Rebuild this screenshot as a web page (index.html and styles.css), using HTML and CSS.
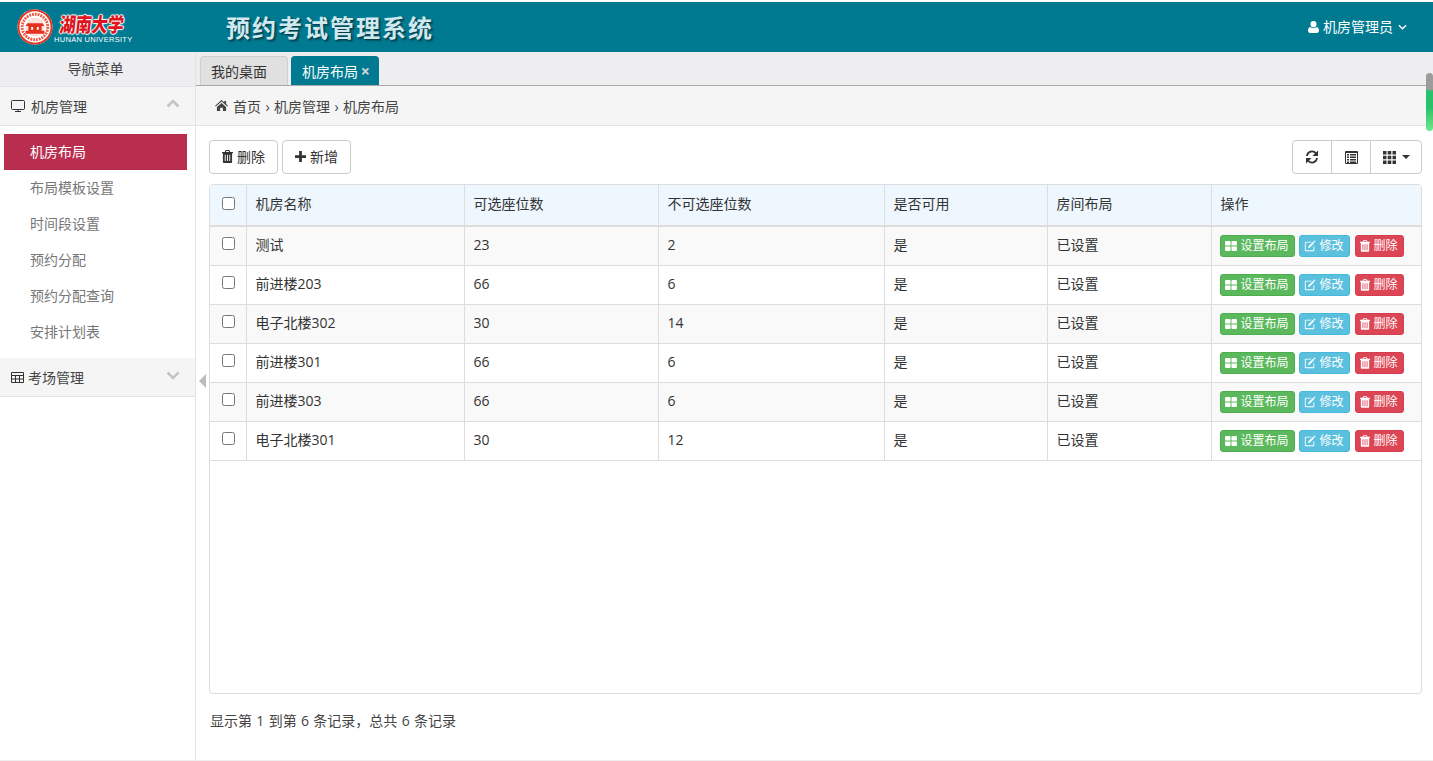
FILE: index.html
```html
<!DOCTYPE html>
<html lang="zh">
<head>
<meta charset="utf-8">
<title>预约考试管理系统</title>
<link rel="stylesheet" href="styles.css">
</head>
<body>
<svg class="defs" width="0" height="0">
  <symbol id="i-trash" viewBox="0 0 12 14"><path d="M4 0h4l1 2h3v1.500h-1V13a1 1 0 0 1-1 1H2a1 1 0 0 1-1-1V3.500H0V2h3zM4.700 1 4.300 2h3.400l-.4-1zM3 5v7h1V5zm2.500 0v7h1V5zM8 5v7h1V5z" fill="currentColor" fill-rule="evenodd"/></symbol>
  <symbol id="i-edit" viewBox="0 0 14 14"><path d="M2 2h7L8 3H2.500A.5.500 0 0 0 2 3.500v8a.5.500 0 0 0 .5.500h8a.5.500 0 0 0 .5-.500V8l1-1v5a1 1 0 0 1-1 1H2a1 1 0 0 1-1-1V3a1 1 0 0 1 1-1z" fill="currentColor"/><path d="M5 7.500 10.500 2 12 3.500 6.500 9 4.800 9.300zM11 1.500l.6-.6a.7.700 0 0 1 1 0l.5.500a.7.700 0 0 1 0 1l-.6.6z" fill="currentColor"/></symbol>
  <symbol id="i-large" viewBox="0 0 13 11"><path d="M0 1a1 1 0 0 1 1-1h4a1 1 0 0 1 1 1v3a1 1 0 0 1-1 1H0zM7 1a1 1 0 0 1 1-1h4a1 1 0 0 1 1 1v4H7zM0 6h6v4a1 1 0 0 1-1 1H1a1 1 0 0 1-1-1zM7 6h6v4a1 1 0 0 1-1 1H8a1 1 0 0 1-1-1z" fill="currentColor"/></symbol>
</svg>

<header class="topbar">
  <div class="logo">
    <svg class="seal" viewBox="0 0 38 38" width="36" height="36" aria-hidden="true">
      <circle cx="19" cy="19" r="18.500" fill="#fff"/>
      <circle cx="19" cy="19" r="17.500" fill="none" stroke="#e8301f" stroke-width="2"/>
      <circle cx="19" cy="19" r="13.500" fill="none" stroke="#ee5a45" stroke-width="3" stroke-dasharray="2 1"/>
      <circle cx="19" cy="19" r="10" fill="#fbe3dc"/>
      <path d="M9 23h20v3H9zM11 15h16l2 3H9zM12 18h14v5H12z" fill="#e8301f"/>
      <path d="M15 19h2v3h-2zM21 19h2v3h-2z" fill="#fff"/>
    </svg>
    <div class="logo-text">
      <div class="logo-cn">湖南大学</div>
      <div class="logo-en">HUNAN UNIVERSITY</div>
    </div>
  </div>
  <div class="sys-title">预约考试管理系统</div>
  <div class="user">
    <svg viewBox="0 0 12 13" width="11" height="12" aria-hidden="true"><path d="M6 0a3.300 3.300 0 0 1 3.300 3.400A3.300 3.300 0 0 1 6 6.800a3.300 3.300 0 0 1-3.300-3.400A3.300 3.300 0 0 1 6 0zM2.500 6.500C3.300 7.300 4.600 7.800 6 7.800s2.700-.5 3.500-1.300c1.600.2 2.500 1.800 2.500 4.200 0 1.400-1 2.300-2.200 2.300H2.200C1 13 0 12.100 0 10.700c0-2.400.9-4 2.500-4.200z" fill="currentColor"/></svg>
    <span>机房管理员</span>
    <svg viewBox="0 0 10 6" width="9" height="6" aria-hidden="true"><path d="M1 1l4 4 4-4" fill="none" stroke="currentColor" stroke-width="1.500"/></svg>
  </div>
</header>

<div class="main">
  <aside class="sidebar">
    <div class="nav-title">导航菜单</div>
    <div class="nav-group">
      <svg class="g-icon g-wide" viewBox="0 0 14 12" width="14" height="12" aria-hidden="true"><path d="M1.500.5h11a1 1 0 0 1 1 1v7a1 1 0 0 1-1 1h-11a1 1 0 0 1-1-1v-7a1 1 0 0 1 1-1zM7 9.500v2M4 11.500h6" fill="none" stroke="currentColor"/></svg>
      <span>机房管理</span>
      <svg class="chev" viewBox="0 0 14 9" width="14" height="9" aria-hidden="true"><path d="M1.500 7.500 7 2l5.500 5.500" fill="none" stroke="currentColor" stroke-width="2.600"/></svg>
    </div>
    <ul class="nav-list">
      <li class="active">机房布局</li>
      <li>布局模板设置</li>
      <li>时间段设置</li>
      <li>预约分配</li>
      <li>预约分配查询</li>
      <li>安排计划表</li>
    </ul>
    <div class="nav-group nav-group-b">
      <svg class="g-icon" viewBox="0 0 13 11" width="13" height="11" aria-hidden="true"><path d="M.5.500h12v10H.5zM.5 3.500h12M.5 7h12M4.500 3.500v7M8.500 3.500v7" fill="none" stroke="currentColor"/></svg>
      <span>考场管理</span>
      <svg class="chev" viewBox="0 0 14 9" width="14" height="9" aria-hidden="true"><path d="M1.500 1.500 7 7l5.500-5.500" fill="none" stroke="currentColor" stroke-width="2.600"/></svg>
    </div>
  </aside>
  <div class="collapse-arrow"></div>

  <section class="content">
    <div class="tabs">
      <div class="tab">我的桌面</div>
      <div class="tab tab-on">机房布局 <span class="tab-x">×</span></div>
    </div>
    <div class="crumbs">
      <svg viewBox="0 0 14 12" width="13" height="11" aria-hidden="true"><path d="M7 0l3 2.600V1h2v3.400L14 6.200l-.7.800L7 1.600.7 7 0 6.200zM2 7.500 7 3.200l5 4.300V12H8.500V8.500h-3V12H2z" fill="currentColor"/></svg>
      <span class="crumb-text">首页<span class="sep">›</span>机房管理<span class="sep">›</span>机房布局</span>
    </div>
    <div class="panel">
      <div class="toolbar">
        <div class="tool-left">
          <button class="btn"><svg class="ic12" aria-hidden="true"><use href="#i-trash"/></svg>删除</button>
          <button class="btn"><svg viewBox="0 0 12 12" width="11" height="11" aria-hidden="true"><path d="M4.500 0h3v4.500H12v3H7.500V12h-3V7.500H0v-3h4.500z" fill="currentColor"/></svg>新增</button>
        </div>
        <div class="tool-right">
          <button class="tbtn"><svg viewBox="0 0 14 14" width="14" height="14" aria-hidden="true"><path d="M2 6A5 5 0 0 1 11 3.500M12 8A5 5 0 0 1 3 10.500" fill="none" stroke="currentColor" stroke-width="1.800"/><path d="M13 .5V6H7.500zM1 13.500V8h5.500z" fill="currentColor"/></svg></button>
          <button class="tbtn"><svg viewBox="0 0 13 13" width="13" height="13" aria-hidden="true"><path d="M.5.500h12v12H.5z" fill="none" stroke="currentColor"/><path d="M1 1h11v1H1zM2 3h2v1.500H2zM5 3h6v1.500H5zM2 5.500h2V7H2zM5 5.500h6V7H5zM2 8h2v1.500H2zM5 8h6v1.500H5zM2 10.500h2V12H2zM5 10.500h6V12H5z" fill="currentColor"/></svg></button>
          <button class="tbtn tbtn-w"><svg viewBox="0 0 13 13" width="13" height="13" aria-hidden="true"><path d="M0 0h3.500v3.500H0zM4.700 0h3.600v3.500H4.700zM9.500 0H13v3.500H9.500zM0 4.700h3.500v3.600H0zM4.700 4.700h3.600v3.600H4.700zM9.500 4.700H13v3.600H9.500zM0 9.500h3.500V13H0zM4.700 9.500h3.600V13H4.700zM9.500 9.500H13V13H9.500z" fill="currentColor"/></svg><i class="caret"></i></button>
        </div>
      </div>
      <div class="table-box">
        <table class="grid">
          <colgroup>
            <col class="c0"><col class="c1"><col class="c2"><col class="c3"><col class="c4"><col class="c5"><col>
          </colgroup>
          <thead>
            <tr><th class="chk"><span class="cb"></span></th><th>机房名称</th><th>可选座位数</th><th>不可选座位数</th><th>是否可用</th><th>房间布局</th><th>操作</th></tr>
          </thead>
          <tbody>
            <tr><td class="chk"><span class="cb"></span></td><td>测试</td><td>23</td><td>2</td><td>是</td><td>已设置</td><td class="ops"><span class="op g"><svg class="ic11" aria-hidden="true"><use href="#i-large"/></svg>设置布局</span><span class="op b"><svg class="ice" aria-hidden="true"><use href="#i-edit"/></svg>修改</span><span class="op r"><svg class="ic10" aria-hidden="true"><use href="#i-trash"/></svg>删除</span></td></tr>
            <tr><td class="chk"><span class="cb"></span></td><td>前进楼203</td><td>66</td><td>6</td><td>是</td><td>已设置</td><td class="ops"><span class="op g"><svg class="ic11" aria-hidden="true"><use href="#i-large"/></svg>设置布局</span><span class="op b"><svg class="ice" aria-hidden="true"><use href="#i-edit"/></svg>修改</span><span class="op r"><svg class="ic10" aria-hidden="true"><use href="#i-trash"/></svg>删除</span></td></tr>
            <tr><td class="chk"><span class="cb"></span></td><td>电子北楼302</td><td>30</td><td>14</td><td>是</td><td>已设置</td><td class="ops"><span class="op g"><svg class="ic11" aria-hidden="true"><use href="#i-large"/></svg>设置布局</span><span class="op b"><svg class="ice" aria-hidden="true"><use href="#i-edit"/></svg>修改</span><span class="op r"><svg class="ic10" aria-hidden="true"><use href="#i-trash"/></svg>删除</span></td></tr>
            <tr><td class="chk"><span class="cb"></span></td><td>前进楼301</td><td>66</td><td>6</td><td>是</td><td>已设置</td><td class="ops"><span class="op g"><svg class="ic11" aria-hidden="true"><use href="#i-large"/></svg>设置布局</span><span class="op b"><svg class="ice" aria-hidden="true"><use href="#i-edit"/></svg>修改</span><span class="op r"><svg class="ic10" aria-hidden="true"><use href="#i-trash"/></svg>删除</span></td></tr>
            <tr><td class="chk"><span class="cb"></span></td><td>前进楼303</td><td>66</td><td>6</td><td>是</td><td>已设置</td><td class="ops"><span class="op g"><svg class="ic11" aria-hidden="true"><use href="#i-large"/></svg>设置布局</span><span class="op b"><svg class="ice" aria-hidden="true"><use href="#i-edit"/></svg>修改</span><span class="op r"><svg class="ic10" aria-hidden="true"><use href="#i-trash"/></svg>删除</span></td></tr>
            <tr><td class="chk"><span class="cb"></span></td><td>电子北楼301</td><td>30</td><td>12</td><td>是</td><td>已设置</td><td class="ops"><span class="op g"><svg class="ic11" aria-hidden="true"><use href="#i-large"/></svg>设置布局</span><span class="op b"><svg class="ice" aria-hidden="true"><use href="#i-edit"/></svg>修改</span><span class="op r"><svg class="ic10" aria-hidden="true"><use href="#i-trash"/></svg>删除</span></td></tr>
          </tbody>
        </table>
      </div>
      <div class="summary">显示第 1 到第 6 条记录，总共 6 条记录</div>
    </div>
  </section>
  <div class="scroll-thumb"></div>
</div>
</body>
</html>
```

FILE: styles.css
```css
* { box-sizing: border-box; }
html, body { margin: 0; height: 761px; overflow: hidden; }
body {
  padding-top: 2px;
  background: #fff;
  color: #333;
  font-family: "Open Sans", "Noto Sans CJK SC", sans-serif;
  font-size: 14px;
  line-height: 20px;
}
.defs { position: absolute; }
.topbar {
  height: 50px;
  background: #007a91;
  color: #fff;
  display: flex;
  align-items: center;
  padding: 0 26px 0 17px;
}
.logo { display: flex; align-items: center; width: 209px; gap: 1px; }
.seal { flex: none; }
.logo-text { display: flex; flex-direction: column; }
.logo-cn {
  font-family: "Noto Sans CJK SC", sans-serif;
  font-weight: 900;
  font-size: 16px;
  line-height: 24px;
  width: 66px;
  margin-left: 6px;
  color: #e0141c;
  white-space: nowrap;
  transform: scaleY(1.25) skewX(-8deg);
  text-shadow: 0 0 1px #fff, 1px 0 1px #fff, -1px 0 1px #fff, 0 1px 1px #fff, 0 -1px 1px #fff;
}
.logo-en {
  font-family: "Liberation Sans", sans-serif;
  font-size: 7.500px;
  line-height: 9px;
  letter-spacing: .3px;
  white-space: nowrap;
}
.sys-title {
  font-family: "Noto Sans CJK SC", sans-serif;
  font-size: 24px;
  font-weight: 700;
  letter-spacing: 2px;
  line-height: 46px;
  color: #cfe9ee;
  text-shadow: 1px 1px 1px #033e4c, 2px 2px 2px #04505f;
}
.user { margin-left: auto; display: flex; align-items: center; gap: 4px; font-size: 14px; }
.user svg:last-child { margin-left: 1px; }

.main { position: relative; display: flex; height: 709px; border-bottom: 1px solid #eee; }
.sidebar { width: 196px; flex: none; border-right: 1px solid #e3e3e3; }
.nav-title {
  height: 35px;
  padding-right: 4px;
  background: #eeeef0;
  border-bottom: 1px solid #e3e3e3;
  text-align: center;
  line-height: 34px;
  color: #444;
}
.nav-group {
  height: 39px;
  display: flex;
  align-items: center;
  gap: 4px;
  padding: 0 15px 0 11px;
  background: #f5f5f5;
  border-bottom: 1px solid #e3e3e3;
  color: #444;
}
.nav-group span { padding-top: 2px; }
.g-icon { color: #333; }
.g-wide { margin-right: 2px; }
.chev { margin-left: auto; margin-top: -6px; color: #c4c4c4; }
.nav-group-b .chev { margin-top: -3px; }
.nav-list { list-style: none; margin: 0; padding: 8px 8px 8px 4px; }
.nav-list li {
  height: 36px;
  padding-left: 26px;
  line-height: 36px;
  color: #777;
}
.nav-list li.active { background: #b92e4e; color: #fff; }
.collapse-arrow {
  position: absolute;
  left: 199px;
  top: 322px;
  border-style: solid;
  border-width: 7px 7px 7px 0;
  border-color: transparent #bbb transparent transparent;
}

.content { flex: 1; min-width: 0; display: flex; flex-direction: column; }
.tabs {
  height: 34px;
  flex: none;
  display: flex;
  align-items: flex-end;
  gap: 3px;
  padding-left: 4px;
  background: #eeeef0;
  border-bottom: 1px solid #a8a8a8;
}
.tab {
  width: 88px;
  height: 29px;
  padding-left: 10px;
  line-height: 30px;
  color: #333;
  background: #e0e0e0;
  border: 1px solid #cfcfcf;
  border-bottom: 0;
  border-radius: 4px 4px 0 0;
}
.tab-on { background: #007a91; border-color: #007a91; color: #fff; }
.tab-x { color: #d5d5d5; font-weight: 700; font-size: 16px; line-height: 16px; margin-left: -1px; }
.crumbs {
  height: 40px;
  flex: none;
  display: flex;
  align-items: center;
  gap: 5px;
  padding-left: 19px;
  background: #f5f5f5;
  border-bottom: 1px solid #e3e3e3;
  color: #444;
}
.crumb-text { padding-top: 2px; }
.sep { display: inline-block; width: 13px; text-align: center; }
.panel { flex: 1; padding: 14px 11px 0 13px; }
.toolbar { display: flex; justify-content: space-between; height: 34px; margin-bottom: 10px; }
.tool-left { display: flex; gap: 4px; }
.btn {
  height: 34px;
  width: 69px;
  display: flex;
  align-items: center;
  justify-content: center;
  gap: 4px;
  padding: 0 0 1px;
  background: #fff;
  border: 1px solid #ccc;
  border-radius: 4px;
  color: #333;
  font: inherit;
}
.ic12 { width: 11px; height: 13px; }
.ic11 { width: 12px; height: 10px; }
.ice { width: 12px; height: 12px; }
.ic10 { width: 10px; height: 12px; }
.tool-right { display: flex; }
.tbtn {
  width: 40px;
  height: 34px;
  padding: 0;
  display: flex;
  align-items: center;
  justify-content: center;
  gap: 6px;
  background: #fff;
  border: 1px solid #ccc;
  margin-left: -1px;
  color: #333;
}
.tbtn:first-child { border-radius: 4px 0 0 4px; margin-left: 0; }
.tbtn-w { width: 52px; border-radius: 0 4px 4px 0; }
.caret { border-style: solid; border-width: 4px 4px 0; border-color: #333 transparent transparent; }
.table-box {
  height: 510px;
  border: 1px solid #ddd;
  border-radius: 4px;
  overflow: hidden;
}
.grid { width: 100%; border-collapse: collapse; table-layout: fixed; }
.c0 { width: 36px; }
.c1 { width: 218px; }
.c2 { width: 194px; }
.c3 { width: 226px; }
.c4 { width: 163px; }
.c5 { width: 164px; }
.grid th, .grid td {
  padding: 0 8px 0 9px;
  border: 1px solid #ddd;
  text-align: left;
  font-weight: 400;
  font-size: 14px;
  white-space: nowrap;
  overflow: hidden;
}
.grid tr > :first-child { border-left: 0; }
.grid tr > :last-child { border-right: 0; }
.grid th { height: 41px; background: #eef7fe; border-top: 0; border-bottom-width: 2px; padding-bottom: 2px; }
.grid td { height: 39px; padding-bottom: 2px; }
.grid tbody tr:nth-child(odd) td { background: #f9f9f9; }
.grid .chk { padding: 0 0 4px 12px; }
.cb {
  display: block;
  width: 13px;
  height: 13px;
  border: 1px solid #767676;
  border-radius: 2.500px;
  background: #fff;
}
.grid .ops { padding: 0 0 0 8px; }
.op {
  display: inline-flex;
  align-items: center;
  justify-content: center;
  gap: 3px;
  height: 22px;
  margin-right: 4px;
  border-radius: 3px;
  color: #fff;
  font-size: 12px;
  vertical-align: middle;
}
.op.g { width: 75px; background: #5cb85c; border: 1px solid #4cae4c; }
.op.b { width: 51px; background: #5bc0de; border: 1px solid #46b8da; margin-right: 5px; }
.op.r { width: 49px; background: #dc4654; border: 1px solid #d43f4f; }
.summary { padding: 17px 0 0 1px; color: #444; word-spacing: .7px; }
.scroll-thumb {
  position: absolute;
  right: 0;
  top: 21px;
  width: 7px;
  height: 58px;
  border-radius: 4px;
  background: linear-gradient(#9c9c9c 0, #9c9c9c 16px, #27c26c 18px, #27c26c 60%, #6fe88e 100%);
}
```
